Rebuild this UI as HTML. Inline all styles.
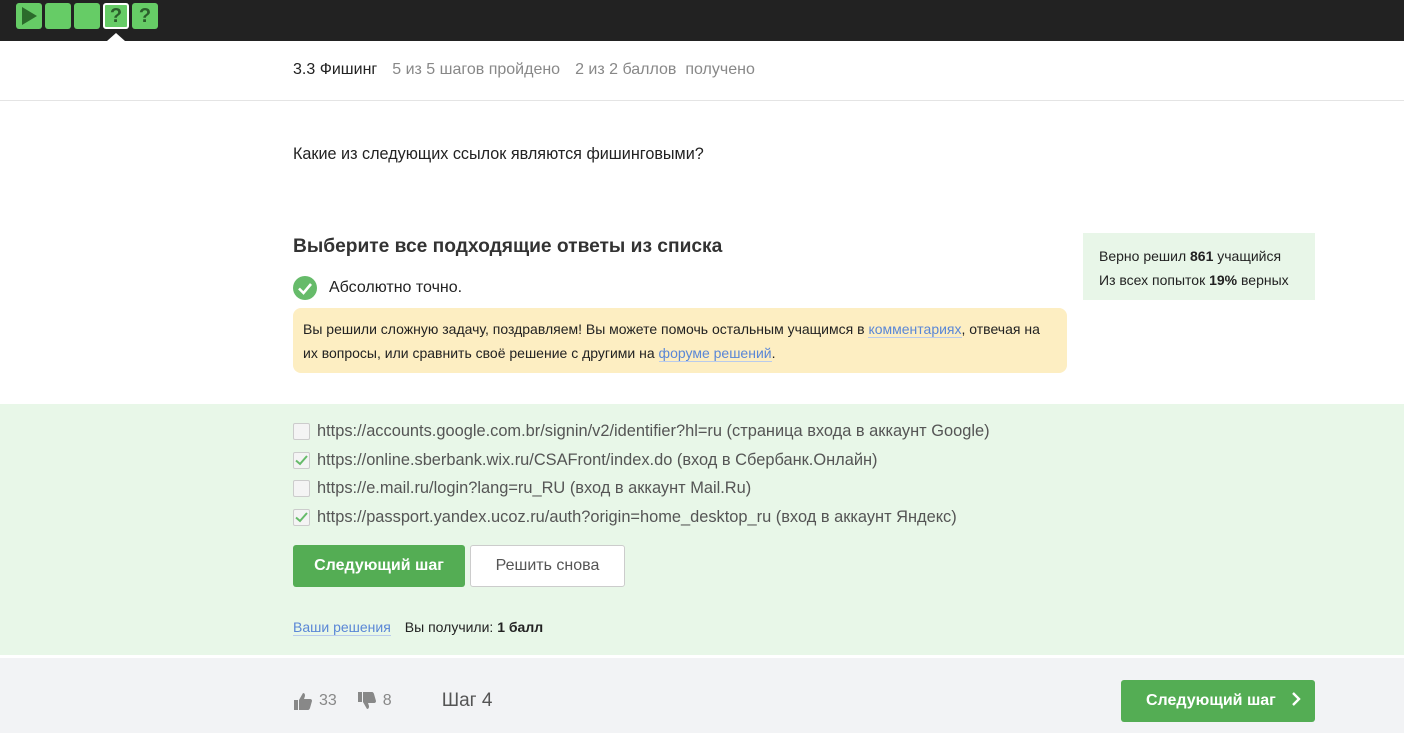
<!DOCTYPE html><html><head><meta charset="utf-8"><style>
*{box-sizing:border-box;margin:0;padding:0}
body{width:1404px;height:733px;overflow:hidden;background:#fff;font-family:"Liberation Sans",Roboto,sans-serif;color:#222;position:relative}
.top{position:absolute;left:0;top:0;width:1404px;height:41px;background:#222}
.t{position:absolute;top:3px;width:26px;height:26px;background:#66cc66;border-radius:3px;color:#2b5e2b;font-weight:bold;font-size:20px;text-align:center;line-height:26px}
.a{position:absolute}
.cb{position:absolute;left:293px;width:17px;height:17px;border:1px solid #ccc;border-radius:2px;background:#f4f4f4}
.opt{position:absolute;left:317px;font-size:16.4px;color:#555}
a{color:#5a87d6;text-decoration:none;border-bottom:1px solid #b9cbec}
</style></head><body>
<div class="top">
<div class="t" style="left:16px"><svg width="26" height="26"><path d="M6 4L21 13L6 22Z" fill="#2b6b2b"/></svg></div>
<div class="t" style="left:45px"></div>
<div class="t" style="left:74px"></div>
<div class="t" style="left:103px;border:2px solid #fff;line-height:22px">?</div>
<div class="t" style="left:132px">?</div>
<div class="a" style="left:107px;top:33px;width:0;height:0;border-left:9px solid transparent;border-right:9px solid transparent;border-bottom:8px solid #fff"></div>
</div>
<div class="a" style="left:0;top:100px;width:1404px;height:1px;background:#e4e4e4"></div>
<div class="a" style="left:293px;top:61px;font-size:16px"><span>3.3 Фишинг</span><span style="color:#888;margin-left:15px">5 из 5 шагов пройдено</span><span style="color:#888;margin-left:15px">2 из 2 баллов&nbsp; получено</span></div>
<div class="a" style="left:293px;top:145px;font-size:16.2px">Какие из следующих ссылок являются фишинговыми?</div>
<div class="a" style="left:293px;top:236px;font-size:19.2px;font-weight:bold;color:#333">Выберите все подходящие ответы из списка</div>
<div class="a" style="left:293px;top:276px;width:24px;height:24px;border-radius:50%;background:#66bb6a"><svg width="24" height="24"><path d="M6 12.5L10.5 17L18 8" stroke="#fff" stroke-width="2.6" fill="none"/></svg></div>
<div class="a" style="left:329px;top:279px;font-size:16px">Абсолютно точно.</div>
<div class="a" style="left:293px;top:308px;width:774px;height:65px;background:#fdeec2;border-radius:8px;padding:9px 10px;font-size:14px;line-height:24px">Вы решили сложную задачу, поздравляем! Вы можете помочь остальным учащимся в <a>комментариях</a>, отвечая на их вопросы, или сравнить своё решение с другими на <a>форуме решений</a>.</div>
<div class="a" style="left:1083px;top:233px;width:232px;height:67px;background:#e8f6e8;padding:11px 16px;font-size:14px;line-height:24px">Верно решил <b>861</b> учащийся<br>Из всех попыток <b>19%</b> верных</div>
<div class="a" style="left:0;top:404px;width:1404px;height:251px;background:#e8f7e8"></div>
<div class="cb" style="top:423px"></div><div class="opt" style="top:422px">https://accounts.google.com.br/signin/v2/identifier?hl=ru (страница входа в аккаунт Google)</div>
<div class="cb" style="top:452px"><svg width="15" height="15"><path d="M2 7.5L6 11L13 3" stroke="#66bb6a" stroke-width="2" fill="none"/></svg></div><div class="opt" style="top:451px">https://online.sberbank.wix.ru/CSAFront/index.do (вход в Сбербанк.Онлайн)</div>
<div class="cb" style="top:480px"></div><div class="opt" style="top:479px">https://e.mail.ru/login?lang=ru_RU (вход в аккаунт Mail.Ru)</div>
<div class="cb" style="top:509px"><svg width="15" height="15"><path d="M2 7.5L6 11L13 3" stroke="#66bb6a" stroke-width="2" fill="none"/></svg></div><div class="opt" style="top:508px">https://passport.yandex.ucoz.ru/auth?origin=home_desktop_ru (вход в аккаунт Яндекс)</div>
<div class="a" style="left:293px;top:545px;width:172px;height:42px;background:#54ad54;border-radius:3px;color:#fff;font-size:16px;font-weight:bold;text-align:center;line-height:42px">Следующий шаг</div>
<div class="a" style="left:470px;top:545px;width:155px;height:42px;background:#fff;border:1px solid #ccc;border-radius:3px;color:#555;font-size:16px;text-align:center;line-height:40px">Решить снова</div>
<div class="a" style="left:293px;top:619px;font-size:14px"><a>Ваши решения</a><span style="margin-left:14px">Вы получили: <b>1 балл</b></span></div>
<div class="a" style="left:0;top:658px;width:1404px;height:75px;background:#f2f3f5"></div>
<div class="a" style="left:293px;top:690px;color:#888;font-size:16px;display:flex;align-items:center">
<svg width="20" height="20"><path d="M1 9h4v10H1z M6 9l4-7c2 0 2 2 2 3l-1 3h6c1.5 0 2 1 2 2l-2 7c-.3 1-1 2-2 2H6z" fill="#888"/></svg><span style="margin-left:6px">33</span>
<svg width="20" height="20" style="margin-left:20px"><path d="M1 1h4v10H1z M6 11l4 7c2 0 2-2 2-3l-1-3h6c1.5 0 2-1 2-2l-2-7c-.3-1-1-2-2-2H6z" fill="#888"/></svg><span style="margin-left:6px">8</span>
<span style="margin-left:50px;font-size:19px;color:#555">Шаг 4</span></div>
<div class="a" style="left:1121px;top:680px;width:194px;height:42px;background:#54ad54;border-radius:3px;color:#fff;font-size:16px;font-weight:bold;line-height:42px;padding-left:25px">Следующий шаг<svg width="12" height="14" style="margin-left:14px;vertical-align:-1px"><path d="M3 1l6 6-6 6" stroke="#fff" stroke-width="2.4" fill="none"/></svg></div>
</body></html>
